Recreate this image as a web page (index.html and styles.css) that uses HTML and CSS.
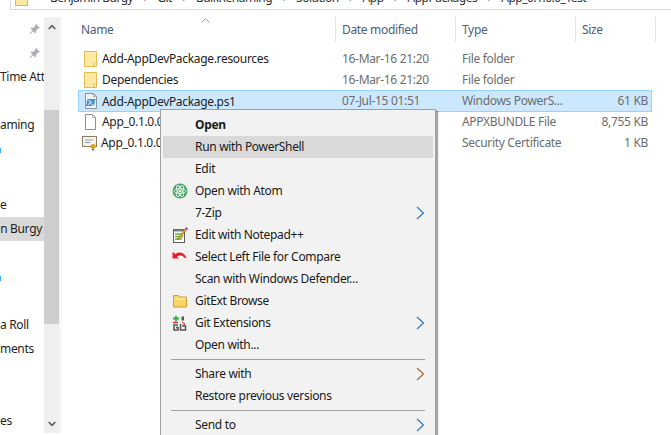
FILE: index.html
```html
<!DOCTYPE html>
<html lang="en">
<head>
<meta charset="utf-8">
<title>File Explorer</title>
<link rel="stylesheet" href="styles.css">
</head>
<body>
<div class="window">
  <div class="address">
    <svg class="addr-folder" width="13" height="16" viewBox="0 0 13 16"><rect x=".5" y=".5" width="12" height="15" fill="#fce9a4" stroke="#e2b84c"/></svg>
    <span class="crumb first">Benjamin Burgy</span><span class="sep">›</span>
    <span class="crumb">Git</span><span class="sep">›</span>
    <span class="crumb">BulkRenaming</span><span class="sep">›</span>
    <span class="crumb">Solution</span><span class="sep">›</span>
    <span class="crumb">App</span><span class="sep">›</span>
    <span class="crumb">AppPackages</span><span class="sep">›</span>
    <span class="crumb">App_0.1.0.0_Test</span>
  </div>
  <div class="content">
    <nav class="nav">
      <div class="nav-list">
        <div class="nav-row pin"><svg width="12" height="12" viewBox="0 0 12 12"><path d="M7 1l4 4-1 .6-1-.2-2 2 .2 2-1 .8-2-2-3 3-.6-.6 3-3-2-2 .8-1 2 .2 2-2-.2-1z" fill="#a9aeb5"/></svg></div>
        <div class="nav-row pin"><svg width="12" height="12" viewBox="0 0 12 12"><path d="M7 1l4 4-1 .6-1-.2-2 2 .2 2-1 .8-2-2-3 3-.6-.6 3-3-2-2 .8-1 2 .2 2-2-.2-1z" fill="#a9aeb5"/></svg></div>
        <div class="nav-row">Time Attendance</div>
        <div class="nav-row"></div>
        <div class="nav-row">aming</div>
        <div class="nav-row"><span class="nav-bit"></span></div>
        <div class="nav-row"></div>
        <div class="nav-row group-start">e</div>
        <div class="nav-row active">n Burgy</div>
        <div class="nav-row"></div>
        <div class="nav-row"><span class="nav-bit"></span></div>
        <div class="nav-row"></div>
        <div class="nav-row">a Roll</div>
        <div class="nav-row">ments</div>
        <div class="nav-row"></div>
        <div class="nav-row"></div>
        <div class="nav-row">es</div>
      </div>
      <div class="scrollbar">
        <svg class="scroll-arrow up" width="8" height="6" viewBox="0 0 8 6"><path d="M.7 5L4 1.6 7.3 5" fill="none" stroke="#606060" stroke-width="1.7"/></svg>
        <div class="thumb"></div>
        <svg class="scroll-arrow down" width="8" height="6" viewBox="0 0 8 6"><path d="M.7 1L4 4.4 7.3 1" fill="none" stroke="#606060" stroke-width="1.7"/></svg>
      </div>
    </nav>
    <main class="files">
      <div class="head">
        <div class="col col-name">Name<svg class="caret" width="9" height="5" viewBox="0 0 9 5"><path d="M.5 4.500L4.500 .7 8.500 4.500" fill="none" stroke="#9a9a9a"/></svg></div>
        <div class="col">Date modified</div>
        <div class="col">Type</div>
        <div class="col">Size</div>
      </div>
      <div class="row">
        <div class="name"><svg class="ficon" width="13" height="16" viewBox="0 0 13 16"><path d="M.5.5h12v15H.5z" fill="#fde9a3" stroke="#e3bb55"/><path d="M10 11v4.500" stroke="#e3bb55"/></svg>Add-AppDevPackage.resources</div>
        <div class="cell">16-Mar-16 21:20</div><div class="cell">File folder</div><div class="cell size"></div>
      </div>
      <div class="row">
        <div class="name"><svg class="ficon" width="13" height="16" viewBox="0 0 13 16"><path d="M.5.5h12v15H.5z" fill="#fde9a3" stroke="#e3bb55"/><path d="M10 11v4.500" stroke="#e3bb55"/></svg>Dependencies</div>
        <div class="cell">16-Mar-16 21:20</div><div class="cell">File folder</div><div class="cell size"></div>
      </div>
      <div class="row selected">
        <div class="name"><svg class="ficon" width="14" height="16" viewBox="0 0 14 16"><path d="M1.500.5h8l3 3v12h-11z" fill="#eef1f5" stroke="#8a929c"/><path d="M9.500.5v3h3" fill="none" stroke="#a8aeb6"/><path d="M3.500 6h8l-1.500 7H2z" fill="#4a94d0"/><path d="M4.500 7.500l3 2-3.500 2" fill="none" stroke="#fff"/><path d="M7 12h3" stroke="#dcebf7"/></svg>Add-AppDevPackage.ps1</div>
        <div class="cell">07-Jul-15 01:51</div><div class="cell">Windows PowerS...</div><div class="cell size">61 KB</div>
      </div>
      <div class="row">
        <div class="name"><svg class="ficon" width="13" height="16" viewBox="0 0 13 16"><path d="M1.500.5h7l3 3v12h-10z" fill="#fff" stroke="#8f8f8f"/><path d="M8.500.5v3h3" fill="none" stroke="#b0b0b0"/></svg>App_0.1.0.0.appxbundle</div>
        <div class="cell">07-Jul-15 01:51</div><div class="cell">APPXBUNDLE File</div><div class="cell size">8,755 KB</div>
      </div>
      <div class="row">
        <div class="name cert"><svg class="ficon" width="16" height="16" viewBox="0 0 16 16"><rect x=".5" y="1.500" width="14" height="10" fill="#f4f1e6" stroke="#8c7d5f"/><path d="M3 5h8M3 7.500h5" stroke="#8aa0bc"/><circle cx="11" cy="11.500" r="2.500" fill="#e0a020"/><path d="M10 14v2l1-1 1 1v-2" fill="#3b6fb5"/></svg>App_0.1.0.0.cer</div>
        <div class="cell">07-Jul-15 01:51</div><div class="cell">Security Certificate</div><div class="cell size">1 KB</div>
      </div>
    </main>
  </div>
  <div class="menu">
    <div class="item strong">Open</div>
    <div class="item hot">Run with PowerShell</div>
    <div class="item">Edit</div>
    <div class="item"><svg class="micon" width="16" height="16" viewBox="0 0 16 16"><circle cx="8" cy="8" r="7.500" fill="#4aa36b"/><circle cx="8" cy="8" r="1.300" fill="#e8f5ec"/><g fill="none" stroke="#e8f5ec" stroke-width=".9"><ellipse cx="8" cy="8" rx="6" ry="2.400"/><ellipse cx="8" cy="8" rx="6" ry="2.400" transform="rotate(60 8 8)"/><ellipse cx="8" cy="8" rx="6" ry="2.400" transform="rotate(120 8 8)"/></g></svg>Open with Atom</div>
    <div class="item">7-Zip<svg class="chev" width="9" height="14" viewBox="0 0 9 14"><path d="M1 1l6.500 6L1 13" fill="none" stroke="#2f7ab8" stroke-width="1.200"/></svg></div>
    <div class="item"><svg class="micon" width="16" height="16" viewBox="0 0 16 16"><rect x="1.500" y="2.500" width="11" height="13" fill="#fff" stroke="#5a5a5a"/><path d="M1.500 2.500h11v2h-11z" fill="#7d7d7d"/><path d="M3 7h8M3 9.500h8M3 12h7" stroke="#6cae3f" stroke-width="1.400"/><path d="M6 11l8-10 1.500 1-8 10-2 1z" fill="#e3b93a" stroke="#7a4a20" stroke-width=".5"/><path d="M13.500 1.500l1.500 1 .8-1.200L14.500 .3z" fill="#a02040"/></svg>Edit with Notepad++</div>
    <div class="item"><svg class="micon" width="16" height="16" viewBox="0 0 16 16"><path d="M.5 3v6.500H7L5 7.500C7 6 10.500 6 12 8.500l2.500 1C13.500 4.500 8 1.500 3.500 5z" fill="#e8202c"/></svg>Select Left File for Compare</div>
    <div class="item">Scan with Windows Defender...</div>
    <div class="item"><svg class="micon" width="16" height="16" viewBox="0 0 16 16"><path d="M1.500 2.500h5l1 1.500h7v10h-13z" fill="#f8d568" stroke="#d49f2c"/><path d="M2.500 6h11" stroke="#fdf0b8"/></svg>GitExt Browse</div>
    <div class="item"><svg class="micon" width="16" height="16" viewBox="0 0 16 16"><path d="M1 3.500h6M4 .8v5.400" stroke="#3aa84a" stroke-width="1.800"/><path d="M9.500 1.500h2.500v4h-2.500z" fill="#555"/><path d="M1 7.500h5" stroke="#e02828" stroke-width="1.500"/><path d="M10 7l3 2-3 2" stroke="#e02828" fill="none"/><path d="M6 10H2v5h4v-2.500H4" fill="none" stroke="#555" stroke-width="1.500"/><path d="M8.500 9v6h5v-4h-3" fill="none" stroke="#555" stroke-width="1.500"/></svg>Git Extensions<svg class="chev" width="9" height="14" viewBox="0 0 9 14"><path d="M1 1l6.500 6L1 13" fill="none" stroke="#2f7ab8" stroke-width="1.200"/></svg></div>
    <div class="item">Open with...</div>
    <div class="divider"></div>
    <div class="item">Share with<svg class="chev" width="9" height="14" viewBox="0 0 9 14"><path d="M1 1l6.500 6L1 13" fill="none" stroke="#a8683a" stroke-width="1.200"/></svg></div>
    <div class="item">Restore previous versions</div>
    <div class="divider"></div>
    <div class="item">Send to<svg class="chev" width="9" height="14" viewBox="0 0 9 14"><path d="M1 1l6.500 6L1 13" fill="none" stroke="#2f7ab8" stroke-width="1.200"/></svg></div>
  </div>
</div>
</body>
</html>
```
FILE: styles.css
```css
html, body {
  margin: 0;
  padding: 0;
  height: 100%;
  background: #fff;
  overflow: hidden;
}
.window {
  position: relative;
  width: 671px;
  height: 435px;
  overflow: hidden;
  font: 12px/16px "Noto Sans", "Open Sans", sans-serif;
  letter-spacing: -0.32px;
  color: #1e1e1e;
}
.address {
  display: flex;
  align-items: center;
  height: 22px;
  margin: -13px 0 7px 10px;
  border-left: 1px solid #d9d9d9;
  border-bottom: 1px solid #d9d9d9;
  white-space: nowrap;
  color: #333;
  letter-spacing: -0.5px;
}
.addr-folder { margin-left: 4px; }
.crumb { display: block; }
.crumb.first { margin-left: 22px; }
.sep { width: 24px; text-align: center; color: #888; }
.content { display: flex; }
.nav { display: flex; width: 60px; height: 416px; flex: none; }
.nav-list { width: 44px; overflow: hidden; }
.nav-row {
  height: 24px;
  line-height: 24px;
  white-space: nowrap;
  overflow: hidden;
}
.pin { display: flex; align-items: center; justify-content: flex-end; padding-right: 3px; }
.group-start { margin-top: 8px; }
.active { background: #d9d9d9; text-align: right; padding-right: 2px; }
.nav-bit { display: inline-block; width: 1px; height: 5px; background: #3fa9f5; }
.scrollbar {
  display: flex;
  flex-direction: column;
  align-items: center;
  width: 16px;
  background: #efefef;
}
.scroll-arrow { flex: none; }
.scroll-arrow.up { margin: 7px 0 0; }
.scroll-arrow.down { margin: auto 0 6px; }
.thumb { flex: none; width: 15px; height: 214px; margin: 80px 1px 0 0; background: #cdcdcd; }
.files {
  flex: 1;
  margin-left: 2px;
  padding-left: 16px;
  box-shadow: -1px 0 0 #f5f5f5;
}
.head, .row {
  display: grid;
  grid-template-columns: 258px 120px 120px 76px;
  width: 574px;
}
.head { grid-template-columns: 258px 120px 120px 80px; height: 25px; margin-bottom: 6px; width: 578px; }
.col {
  position: relative;
  padding-left: 6px;
  line-height: 25px;
  color: #4c607a;
  border-right: 1px solid #e5e5e5;
}
.col-name { padding-left: 3px; }
.caret { position: absolute; left: 123px; top: 1px; }
.row { height: 21px; line-height: 21px; color: #6d6d6d; white-space: nowrap; }
.selected {
  height: 22px;
  margin-bottom: -1px;
  background: #cce8ff;
  box-shadow: inset 0 0 0 1px #99d1ff;
}
.name { display: flex; align-items: center; padding-left: 6px; color: #1e1e1e; overflow: hidden; }
.ficon { flex: none; margin-right: 5px; }
.selected .ficon { margin-right: 4px; }
.cert .ficon { margin-left: -2px; margin-right: 3px; }
.cell { padding-left: 6px; }
.size { padding: 0 4px 0 0; text-align: right; }
.menu {
  position: absolute;
  left: 160px;
  top: 109px;
  width: 270px;
  padding: 4px 2px 0;
  background: #f2f2f2;
  border: 1px solid #a0a0a0;
  box-shadow: 2px 2px 1px rgba(0,0,0,.35);
}
.item {
  position: relative;
  height: 22px;
  line-height: 22px;
  padding-left: 32px;
  color: #1a1a1a;
  white-space: nowrap;
}
.strong { font-weight: 700; }
.hot { background: #d9d9d9; }
.micon { position: absolute; left: 9px; top: 3px; }
.chev { position: absolute; right: 8px; top: 4px; }
.divider { height: 1px; margin: 3px 8px 3px 8px; background: #a0a0a0; }
```
